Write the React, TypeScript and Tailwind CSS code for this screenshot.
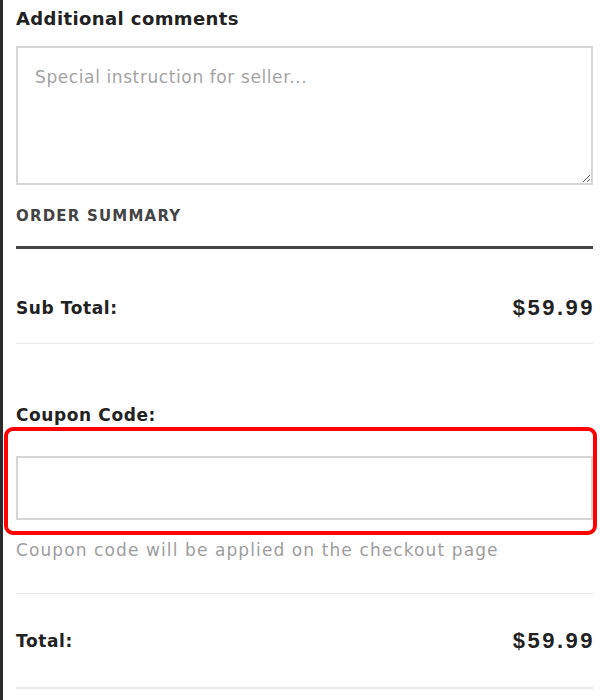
import React from 'react';

const font = { fontFamily: '"DejaVu Sans", "Noto Sans", sans-serif' };
const priceFont = { fontFamily: '"Liberation Sans", Arial, sans-serif' };

const App: React.FC = () => {
  return (
    <div className="w-[600px] h-[700px] bg-white overflow-hidden relative" style={font}>
      <div className="h-full border-l-[3px] border-[#2b2b2b] pl-[13px] pr-[7px]">
        {/* Comments */}
        <h2 className="pt-[6px] h-[46px] text-[18px] leading-[26px] font-bold tracking-[0.4px] text-[#222]">
          Additional comments
        </h2>
        <textarea
          placeholder="Special instruction for seller..."
          className="block w-full h-[139px] border-2 border-[#d6d6d6] px-[17px] py-[17px] text-[17px] leading-[24px] tracking-[0.6px] text-[#333] placeholder:text-[#a3a3a3] resize-y outline-none"
        />

        {/* Order summary */}
        <div className="mt-[20px] text-[15px] leading-[22px] font-bold tracking-[0.08em] text-[#444]">
          ORDER SUMMARY
        </div>
        <div className="mt-[19px] h-[3px] bg-[#444]" />

        <div className="flex items-start justify-between h-[95px] pt-[47px] border-b border-[#e6e6e6]">
          <span className="text-[17px] leading-[24px] font-bold tracking-[0.6px] text-[#222]">Sub Total:</span>
          <span className="text-[22px] leading-[24px] font-bold tracking-[2.5px] -mr-[2px] text-[#222]" style={priceFont}>
            $59.99
          </span>
        </div>

        {/* Coupon */}
        <div className="mt-[58px] text-[17px] leading-[26px] font-bold tracking-[0.6px] text-[#222]">Coupon Code:</div>
        <input
          type="text"
          className="block mt-[28px] w-full h-[64px] border-2 border-[#d6d6d6] px-4 text-[16px] outline-none"
        />
        <p className="mt-[18px] text-[17px] leading-[24px] tracking-[1.1px] text-[#9d9d9d]">
          Coupon code will be applied on the checkout page
        </p>
        <div className="mt-[31px] h-px bg-[#e6e6e6]" />

        <div className="flex items-center justify-between h-[95px] border-b-2 border-[#e6e6e6]">
          <span className="text-[17px] leading-[24px] font-bold tracking-[0.6px] text-[#222]">Total:</span>
          <span className="text-[22px] leading-[24px] font-bold tracking-[2.5px] -mr-[2px] text-[#222]" style={priceFont}>
            $59.99
          </span>
        </div>
      </div>

      {/* highlight annotation */}
      <div className="absolute left-[4px] top-[427px] w-[593px] h-[108px] border-[4px] border-[#ff0000] rounded-[9px] pointer-events-none" />
    </div>
  );
};

export default App;
